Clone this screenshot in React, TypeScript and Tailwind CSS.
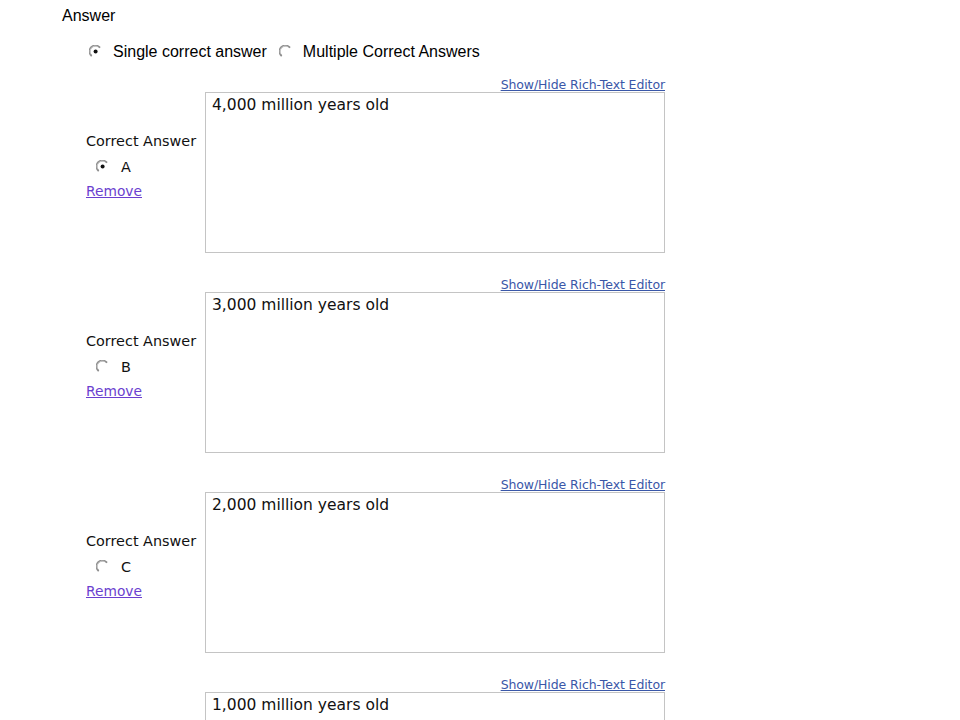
const answers = [
  { letter: "A", text: "4,000 million years old", checked: true },
  { letter: "B", text: "3,000 million years old", checked: false },
  { letter: "C", text: "2,000 million years old", checked: false },
  { letter: "D", text: "1,000 million years old", checked: false },
];

function Radio({ checked }: { checked?: boolean }) {
  return (
    <svg width="14" height="14" viewBox="0 0 14 14" className="shrink-0">
      <path d="M2.2 10.5A5.4 5.4 0 0 1 10.5 2.2" fill="none" stroke="#8f8f8f" strokeWidth="1.8" strokeLinecap="round" />
      <path d="M1.4 8.6A5.6 5.6 0 0 1 8.6 1.4" fill="none" stroke="#c9c9c9" strokeWidth="1" />
      {checked && <circle cx="6.6" cy="6.6" r="2" fill="#111" />}
    </svg>
  );
}

export default function App() {
  return (
    <div className="h-[720px] overflow-hidden bg-white text-black" style={{ fontFamily: '"DejaVu Sans", Verdana, sans-serif' }}>
      <div className="pl-[62px] pt-[6px]">
        <div className="text-[16px] leading-[20px] font-['Liberation_Sans',Arial,sans-serif]">Answer</div>
        <div className="mt-[17px] ml-[27px] flex items-center text-[16px] leading-[18px] font-['Liberation_Sans',Arial,sans-serif]">
          <Radio checked />
          <span className="ml-[10px]">Single correct answer</span>
          <span className="ml-[12px]"><Radio /></span>
          <span className="ml-[10px]">Multiple Correct Answers</span>
        </div>
      </div>

      <div className="mt-[17px] flex flex-col gap-[25px]">
        {answers.map((a) => (
          <div key={a.letter} className="flex">
            <div className="w-[205px] shrink-0 pl-[86px] pt-[54px] text-[14.4px] leading-[18px] text-[#111]">
              <div>Correct Answer</div>
              <div className="mt-[8px] ml-[10px] flex items-center">
                <Radio checked={a.checked} />
                <span className="ml-[11px]">{a.letter}</span>
              </div>
              <a href="#" className="block mt-[6px] text-[13.8px] text-[#6b3fcf] underline">Remove</a>
            </div>
            <div className="w-[460px] shrink-0">
              <div className="flex justify-end">
                <a href="#" className="text-[12.5px] leading-[14px] tracking-[-0.1px] text-[#3a57a8] underline">Show/Hide Rich-Text Editor</a>
              </div>
              <div className="h-[161px] border border-[#c4c4c4] px-[6px] pt-[1px] text-[15.5px] leading-[22px] text-[#111]">
                {a.text}
              </div>
            </div>
          </div>
        ))}
      </div>
    </div>
  );
}
